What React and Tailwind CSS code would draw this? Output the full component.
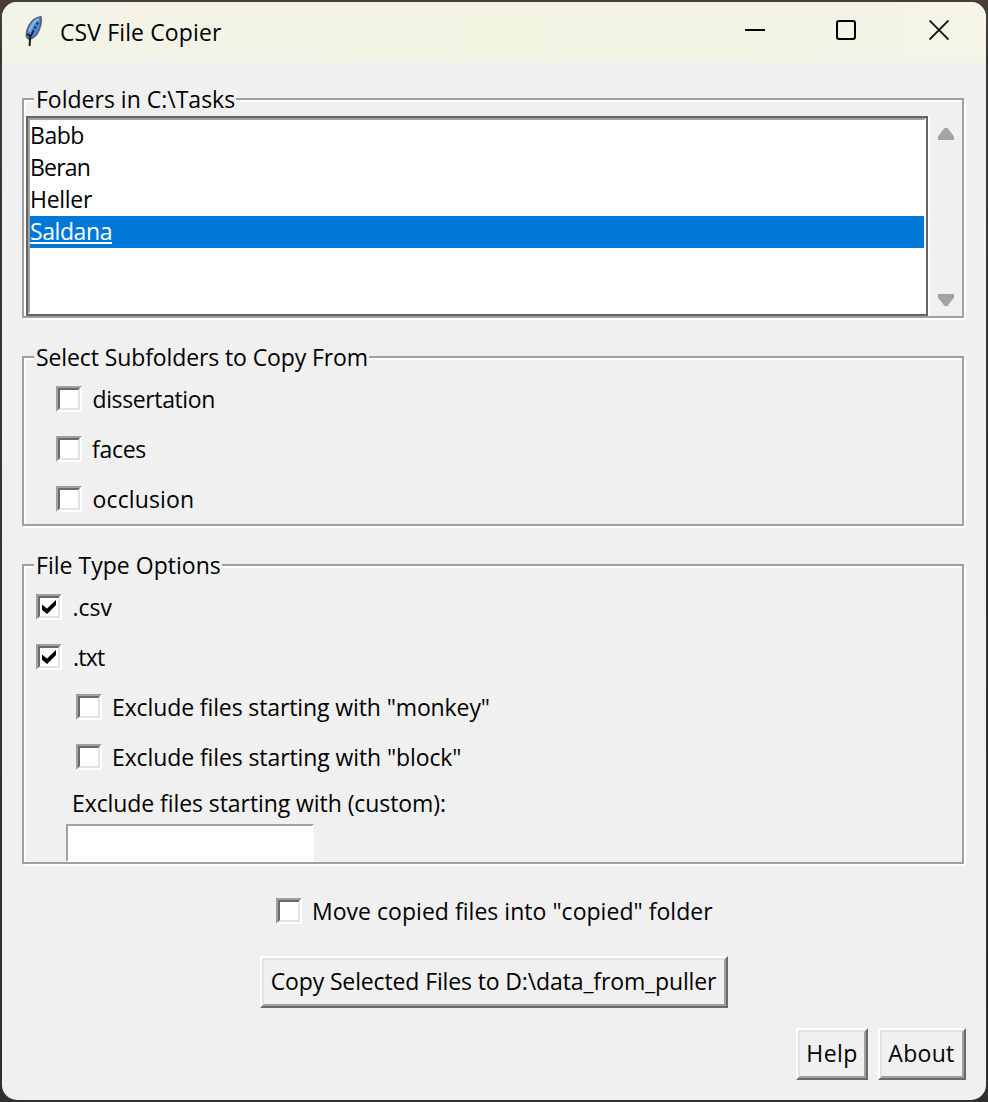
import { useState } from "react";

function Feather() {
  return (
    <svg width="20" height="34" viewBox="0 0 20 34" className="shrink-0">
      <path d="M16.8 2.8 C12 3.4 7.5 7 5 11.5 C3 15.5 2 19.5 2.6 23 L5.2 25.4 C10 24 13.5 20.5 15.2 15.8 C17 11 18 6.5 16.8 2.8 Z" fill="#4a8ad2" stroke="#5d6469" strokeWidth="1.6" />
      <path d="M14.6 5 C11 7 7.4 11.6 5.2 17.5" stroke="#7fb2ea" strokeWidth="2.6" fill="none" />
      <path d="M14 8.5 L12.4 10.5 M11.6 12.5 L10.6 14.5 M9.6 16.2 L8.6 18.5 L7.6 20.5 L6 23" stroke="#10243f" strokeWidth="1.8" fill="none" />
      <path d="M3.2 20 L6.2 22 L5.6 32" stroke="#16181b" strokeWidth="2" fill="none" />
    </svg>
  );
}

function TitleBar() {
  return (
    <header className="flex h-[60px] items-start bg-linear-to-r from-[#f2f4e8] via-[#f4f4e3] to-[#f4f4e7] pr-[37px] pl-[22px]">
      <div className="flex pt-[12px]">
        <Feather />
        <h1 className="mt-[5px] ml-[16px] text-[23px] leading-[26px] tracking-[0.12px]">CSV File Copier</h1>
      </div>
      <div className="ml-auto flex gap-[71px] pt-[18px]">
        <svg width="20" height="20" viewBox="0 0 20 20">
          <path d="M0 10H20" stroke="#000" strokeWidth="2" />
        </svg>
        <svg width="20" height="20" viewBox="0 0 20 20" className="mr-[2px]">
          <rect x="1" y="1" width="18" height="18" rx="2" fill="none" stroke="#000" strokeWidth="2" />
        </svg>
        <svg width="20" height="20" viewBox="0 0 20 20">
          <path d="M0.5 0.5L19.5 19.5M19.5 0.5L0.5 19.5" stroke="#111" strokeWidth="1.9" />
        </svg>
      </div>
    </header>
  );
}

function Frame({ title, tracking, className, children }) {
  return (
    <section className={`flex flex-col items-start border-2 border-[#a0a0a0] shadow-[inset_2px_2px_0_#fff,2px_2px_0_#fff] ${className}`}>
      <h2 className={`-mt-[13px] ml-[10px] h-6 shrink-0 bg-[#f0f0f0] pr-px pl-[2px] leading-6 whitespace-nowrap ${tracking}`}>{title}</h2>
      {children}
    </section>
  );
}

function Check({ label, on = false, className = "", textClass = "ml-[10.5px]" }) {
  const [checked, setChecked] = useState(on);
  return (
    <button type="button" role="checkbox" aria-checked={checked} onClick={() => setChecked(!checked)} className={`flex h-[26px] shrink-0 items-start ${className}`}>
      <span className="size-[26px] shrink-0 border-2 border-t-[#a0a0a0] border-r-white border-b-white border-l-[#a0a0a0]">
        <span className="flex size-[22px] items-start border-2 border-t-[#696969] border-r-[#e3e3e3] border-b-[#e3e3e3] border-l-[#696969] bg-white pt-[2px] pl-[2px]">
          {checked && (
            <svg width="14" height="14" viewBox="0 0 14 14">
              <path d="M0 4.5L5 8.5L14 0V5L5 14L0 9.8Z" fill="#000" />
            </svg>
          )}
        </span>
      </span>
      <span className={`leading-[26px] whitespace-nowrap ${textClass}`}>{label}</span>
    </button>
  );
}

function Button({ className, textClass, children }) {
  return (
    <button type="button" className={`h-[52px] border-2 border-t-white border-r-[#696969] border-b-[#696969] border-l-white ${className}`}>
      <span className="flex h-12 justify-center border-2 border-t-[#e3e3e3] border-r-[#a0a0a0] border-b-[#a0a0a0] border-l-[#e3e3e3] pt-[5px]">
        <span className={`leading-8 whitespace-nowrap ${textClass}`}>{children}</span>
      </span>
    </button>
  );
}

const folders = [
  { name: "Babb", tracking: "tracking-[-0.45px]" },
  { name: "Beran", tracking: "tracking-[-0.8px]" },
  { name: "Heller", tracking: "tracking-[-0.3px]" },
  { name: "Saldana", tracking: "tracking-[-0.42px]" },
];

function FolderList() {
  const [selected, setSelected] = useState("Saldana");
  return (
    <div className="mt-[5px] ml-[2px] flex h-[200px] self-stretch">
      <div className="w-[902px] border-2 border-[#646464] bg-white">
        <ul className="h-full border-2 border-t-[#a0a0a0] border-r-white border-b-white border-l-[#a0a0a0]">
          {folders.map((f) => (
            <li
              key={f.name}
              onClick={() => setSelected(f.name)}
              className={`h-8 leading-[30px] ${f.tracking} ${selected === f.name ? "bg-[#0078d7] text-white" : ""}`}
            >
              <span className={selected === f.name ? "inline-block h-[28px] border-b-2 border-white" : ""}>{f.name}</span>
            </li>
          ))}
        </ul>
      </div>
      <div className="flex w-[34px] flex-col items-center justify-between border-l-2 border-white pt-3 pb-[10px]">
        <svg width="16" height="12" viewBox="0 0 16 12">
          <path d="M0 12V8.5L6.5 0H9.5L16 8.5V12Z" fill="#a3a3a3" />
        </svg>
        <svg width="16" height="12" viewBox="0 0 16 12">
          <path d="M0 0V3.5L6.5 12H9.5L16 3.5V0Z" fill="#a3a3a3" />
        </svg>
      </div>
    </div>
  );
}

export default function App() {
  return (
    <div className="h-[1102px] w-[988px] bg-linear-to-b from-[#4a3f38] via-[#38383b] via-5% to-[#303033] p-[2px]">
      <div className="flex h-[1098px] flex-col overflow-hidden rounded-[15px] bg-[#f0f0f0] font-['Open_Sans','Noto_Sans',sans-serif] text-[23px] text-black">
        <TitleBar />
        <main className="flex flex-col pt-9 pr-[22px] pl-5">
          <Frame title="Folders in C:\Tasks" tracking="tracking-[0px]" className="h-[220px]">
            <FolderList />
          </Frame>

          <Frame title="Select Subfolders to Copy From" tracking="tracking-[-0.11px]" className="mt-[38px] h-[170px]">
            <div className="mt-[17px] ml-8 flex flex-col gap-6">
              <Check label="dissertation" textClass="ml-[10.5px] tracking-[-0.38px]" />
              <Check label="faces" textClass="ml-[10px] tracking-[-0.3px]" />
              <Check label="occlusion" textClass="ml-[10.5px] tracking-[0.14px]" />
            </div>
          </Frame>

          <Frame title="File Type Options" tracking="tracking-[0.02px]" className="mt-[38px] h-[300px]">
            <div className="mt-[17px] ml-3 flex flex-col gap-6">
              <Check label=".csv" on />
              <Check label=".txt" on textClass="ml-[11px] tracking-[-0.8px]" />
              <Check label={'Exclude files starting with "monkey"'} className="ml-10" textClass="ml-[10px] tracking-[-0.11px]" />
              <Check label={'Exclude files starting with "block"'} className="ml-10" textClass="ml-[10px] tracking-[-0.1px]" />
            </div>
            <label htmlFor="custom" className="mt-5 ml-[48px] h-[26px] leading-[26px] tracking-[-0.075px] whitespace-nowrap">
              Exclude files starting with (custom):
            </label>
            <input
              id="custom"
              type="text"
              className="mt-2 ml-[42px] h-[38px] w-[248px] shrink-0 border-2 border-t-[#a0a0a0] border-r-white border-b-white border-l-[#a0a0a0] bg-white px-1 outline-none"
            />
          </Frame>

          <Check label={'Move copied files into "copied" folder'} className="mt-[34px] ml-[254px] self-start" textClass="ml-[10px] tracking-[0.03px]" />
          <Button className="mt-8 ml-[238px] w-[468px] self-start" textClass="-ml-px tracking-[-0.13px]">
            Copy Selected Files to D:\data_from_puller
          </Button>
        </main>
        <footer className="mt-5 flex justify-end gap-[10px] pr-5">
          <Button className="w-[72px]" textClass="tracking-[0.4px]">Help</Button>
          <Button className="w-[88px]" textClass="-ml-px tracking-[0.3px]">About</Button>
        </footer>
      </div>
    </div>
  );
}
